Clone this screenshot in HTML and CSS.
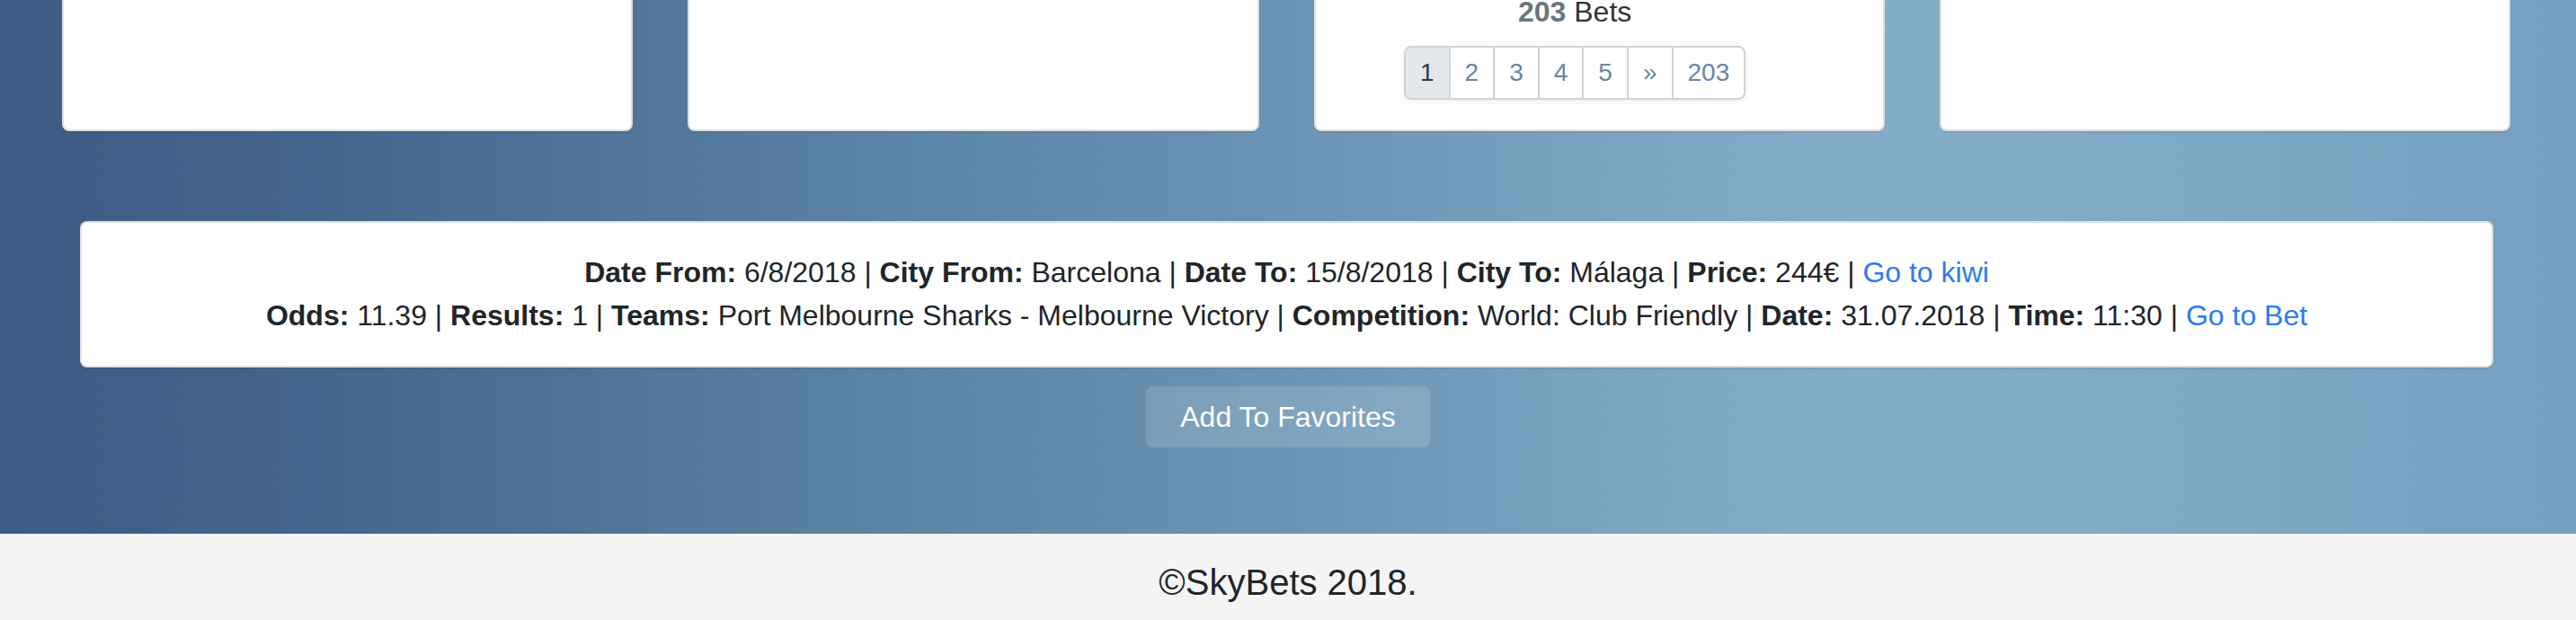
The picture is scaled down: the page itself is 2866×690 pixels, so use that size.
FILE: index.html
```html
<!DOCTYPE html>
<html lang="en">
<head>
<meta charset="utf-8">
<title>SkyBets</title>
<link rel="stylesheet" href="styles.css">
</head>
<body>
<main class="hero">
  <section class="cards">
    <div class="card"></div>
    <div class="card"></div>
    <div class="card card-bets">
      <div class="bets-count"><strong class="bets-num">203</strong> Bets</div>
      <ul class="pagination">
        <li class="page active">1</li>
        <li class="page">2</li>
        <li class="page">3</li>
        <li class="page">4</li>
        <li class="page">5</li>
        <li class="page">&raquo;</li>
        <li class="page">203</li>
      </ul>
    </div>
    <div class="card"></div>
  </section>

  <section class="details-wrap">
    <div class="details">
      <div class="line"><strong>Date From:</strong> 6/8/2018 | <strong>City From:</strong> Barcelona | <strong>Date To:</strong> 15/8/2018 | <strong>City To:</strong> Málaga | <strong>Price:</strong> 244€ | <a class="link" href="#">Go to kiwi</a></div>
      <div class="line"><strong>Odds:</strong> 11.39 | <strong>Results:</strong> 1 | <strong>Teams:</strong> Port Melbourne Sharks - Melbourne Victory | <strong>Competition:</strong> World: Club Friendly | <strong>Date:</strong> 31.07.2018 | <strong>Time:</strong> 11:30 | <a class="link" href="#">Go to Bet</a></div>
    </div>
  </section>

  <div class="actions">
    <button class="fav-btn" type="button">Add To Favorites</button>
  </div>
</main>
<footer class="footer">©SkyBets 2018.</footer>
</body>
</html>
```

FILE: styles.css
```css
* { box-sizing: border-box; }

html, body {
  margin: 0;
  padding: 0;
}

body {
  font-family: "Liberation Sans", Arial, Helvetica, sans-serif;
  font-size: 32px;
  line-height: 48px;
  color: #212529;
  width: 2866px;
  height: 690px;
  overflow: hidden;
}

.hero {
  height: 594px;
  background: linear-gradient(to right,
    #3d5b83 0%,
    #44658b 12%,
    #52789b 26%,
    #5f88a8 38%,
    #6b94b4 50%,
    #7aa3c2 62%,
    #84adca 72%,
    #82abc8 80%,
    #7aa5c3 90%,
    #75a0c0 100%);
  padding-bottom: 96px;
}

.cards {
  display: grid;
  grid-template-columns: repeat(4, 1fr);
  column-gap: 61px;
  padding: 0 73px 0 69px;
  height: 146px;
}

.card {
  background: #fff;
  border: 2px solid rgba(0, 0, 0, 0.12);
  border-top: none;
  border-radius: 0 0 8px 8px;
  box-shadow: 0 2px 1px rgba(0, 0, 0, 0.06);
}

.card-bets {
  text-align: center;
  padding-right: 54px;
}

.bets-count {
  font-size: 32px;
  line-height: 26px;
  color: #333;
}

.bets-num {
  color: #6c757d;
}

.pagination {
  list-style: none;
  margin: 25px 0 0;
  padding: 0;
  display: inline-flex;
  border-radius: 8px;
  box-shadow: 0 2px 6px rgba(0, 0, 0, 0.08);
}

.page {
  font-size: 28px;
  line-height: 32px;
  padding: 12px 16px;
  border: 2px solid #cfd4da;
  margin-left: -2px;
  color: #6985a4;
  background: #fff;
}

.page:first-child {
  margin-left: 0;
  border-radius: 8px 0 0 8px;
}

.page:last-child {
  border-radius: 0 8px 8px 0;
}

.page.active {
  background: #e4e7eb;
  color: #343a40;
}

.details-wrap {
  padding: 0 92px 0 89px;
  margin-top: 100px;
}

.details {
  background: #fff;
  border: 2px solid rgba(0, 0, 0, 0.12);
  border-radius: 8px;
  box-shadow: 0 2px 1px rgba(0, 0, 0, 0.06);
  padding: 31px 32px 32px;
  text-align: center;
}

.link {
  color: #2b7bf3;
  text-decoration: none;
}

.actions {
  margin-top: 21px;
  display: flex;
  justify-content: center;
}

.fav-btn {
  font-family: inherit;
  font-size: 32px;
  line-height: 48px;
  padding: 10px 38px;
  color: #fff;
  background: rgba(255, 255, 255, 0.14);
  border: none;
  border-radius: 8px;
}

.footer {
  background: #f4f4f4;
  height: 96px;
  padding: 24px 0 12px;
  text-align: center;
  font-size: 40px;
  line-height: 60px;
  color: #212529;
}
```
